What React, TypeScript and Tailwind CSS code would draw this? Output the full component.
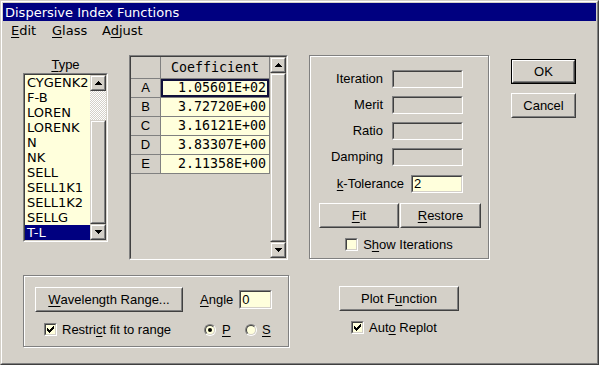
import React from "react";

const F = "font-['Liberation_Sans',Arial,sans-serif] text-[13px] text-black";
const V = "font-['DejaVu_Sans',Verdana,sans-serif] text-[13px]";
const M = "font-['DejaVu_Sans_Mono',monospace] text-[13.3px]";

function Sunken({ className = "", inner = "", children }: { className?: string; inner?: string; children?: React.ReactNode }) {
  return (
    <div className={`border border-t-[#808080] border-l-[#808080] border-r-white border-b-white ${className}`}>
      <div className={`w-full h-full border border-t-[#404040] border-l-[#404040] border-r-[#d4d0c8] border-b-[#d4d0c8] ${inner}`}>
        {children}
      </div>
    </div>
  );
}

function Btn({ className = "", children }: { className?: string; children?: React.ReactNode }) {
  return (
    <div className={`border border-t-white border-l-white border-r-[#404040] border-b-[#404040] bg-[#d4d0c8] ${className}`}>
      <div className={`w-full h-full border border-t-[#d4d0c8] border-l-[#d4d0c8] border-r-[#808080] border-b-[#808080] flex items-center justify-center ${F}`}>
        {children}
      </div>
    </div>
  );
}

function ScrollPart({ className = "", children }: { className?: string; children?: React.ReactNode }) {
  return (
    <div className={`border border-t-[#d4d0c8] border-l-[#d4d0c8] border-r-[#404040] border-b-[#404040] bg-[#d4d0c8] ${className}`}>
      <div className="w-full h-full border border-t-white border-l-white border-r-[#808080] border-b-[#808080] flex items-center justify-center">
        {children}
      </div>
    </div>
  );
}

function UpArrow() {
  return (
    <svg width="7" height="4" viewBox="0 0 7 4" shapeRendering="crispEdges">
      <path d="M3 0h1v1h1v1h1v1h1v1H0V3h1V2h1V1h1z" fill="#000" />
    </svg>
  );
}

function DownArrow() {
  return (
    <svg width="7" height="4" viewBox="0 0 7 4" shapeRendering="crispEdges">
      <path d="M0 0h7v1H6v1H5v1H4v1H3V3H2V2H1V1H0z" fill="#000" />
    </svg>
  );
}

function Check({ checked }: { checked?: boolean }) {
  return (
    <Sunken className="w-[13px] h-[13px] shrink-0" inner="bg-[#ffffdc] flex items-center justify-center">
      {checked && (
        <svg width="7" height="7" viewBox="0 0 7 7" shapeRendering="crispEdges">
          <path d="M6 0h1v3H6v1H5v1H4v1H3v1H2V6H1V5H0V2h1v1h1v1h1V3h1V2h1V1h1z" fill="#000" />
        </svg>
      )}
    </Sunken>
  );
}

function Radio({ on }: { on?: boolean }) {
  return (
    <div className="w-[12px] h-[12px] rounded-full border border-t-[#808080] border-l-[#808080] border-r-white border-b-white shrink-0">
      <div className="w-full h-full rounded-full border border-t-[#404040] border-l-[#404040] border-r-[#d4d0c8] border-b-[#d4d0c8] bg-[#ffffdc] flex items-center justify-center">
        {on && <div className="w-[4px] h-[4px] rounded-full bg-black" />}
      </div>
    </div>
  );
}

const U = ({ children }: { children: React.ReactNode }) => <span className="underline underline-offset-[2px]">{children}</span>;

const items = ["CYGENK2", "F-B", "LOREN", "LORENK", "N", "NK", "SELL", "SELL1K1", "SELL1K2", "SELLG", "T-L"];
const rows: [string, string][] = [
  ["A", "1.05601E+02"],
  ["B", "3.72720E+00"],
  ["C", "3.16121E+00"],
  ["D", "3.83307E+00"],
  ["E", "2.11358E+00"],
];

function FieldRow({ label, mt, yellow, value, fieldW = "w-[71px]", gap = "ml-[9px]" }: { label: React.ReactNode; mt: string; yellow?: boolean; value?: string; fieldW?: string; gap?: string }) {
  return (
    <div className={`flex justify-end items-center h-[18px] pr-[25px] ${mt}`}>
      <div className={`${F} leading-[18px] whitespace-nowrap`}>{label}</div>
      <Sunken className={`${fieldW} h-[18px] ${gap}`} inner={`${yellow ? "bg-[#ffffdc]" : "bg-[#d4d0c8]"} pl-[1px] ${F} leading-[14px]`}>
        {value}
      </Sunken>
    </div>
  );
}

export default function App() {
  return (
    <div className="w-[599px] h-[365px] bg-[#d4d0c8] border border-t-[#d4d0c8] border-l-[#d4d0c8] border-r-[#404040] border-b-[#404040] overflow-hidden">
      <div className="w-full h-full border border-t-white border-l-white border-r-[#808080] border-b-[#808080] p-px flex flex-col">
        {/* Title bar */}
        <div className={`h-[18px] shrink-0 bg-[#000080] text-white pl-[2px] pt-[2px] leading-[16px] ${V}`}>Dispersive Index Functions</div>
        {/* Menu */}
        <div className={`h-[19px] shrink-0 flex leading-[19px] pl-[8px] text-black ${V}`}>
          <div className="w-[41px]"><U>E</U>dit</div>
          <div className="w-[50px]"><U>G</U>lass</div>
          <div>A<U>d</U>just</div>
        </div>
        {/* Body */}
        <div className="flex flex-col">
          <div className="flex items-start pl-[20px]">
            {/* Type list */}
            <div className="mt-[17px] w-[85px] flex flex-col">
              <div className={`h-[15px] leading-[15px] text-center ${F}`}><U>T</U>ype</div>
              <Sunken className="mt-[1px] h-[169px] w-[85px]" inner="flex bg-[#ffffdc]">
                <div className="w-[65px] overflow-hidden flex flex-col">
                  {items.map((it, i) => (
                    <div
                      key={it}
                      className={`h-[15px] leading-[15px] pl-[2px] whitespace-nowrap ${V} ${i === items.length - 1 ? "bg-[#000080] text-white" : "text-black"}`}
                    >
                      {it}
                    </div>
                  ))}
                </div>
                <div className="w-[16px] flex flex-col">
                  <ScrollPart className="h-[16px]"><UpArrow /></ScrollPart>
                  <div className="h-[29px] bg-[repeating-conic-gradient(#ffffff_0%_25%,#d4d0c8_0%_50%)] bg-[length:2px_2px]" />
                  <ScrollPart className="h-[104px]" />
                  <ScrollPart className="h-[16px]"><DownArrow /></ScrollPart>
                </div>
              </Sunken>
            </div>

            {/* Grid */}
            <Sunken className="ml-[21px] mt-[15px] w-[159px] h-[205px]" inner="flex bg-[#d4d0c8]">
              <div className="w-[139px] flex flex-col">
                <div className="flex h-[22px]">
                  <div className="w-[30px] border-r border-b border-[#808080]" />
                  <div className={`w-[109px] border-r border-b border-[#808080] flex items-center justify-center ${M}`}>Coefficient</div>
                </div>
                {rows.map(([k, v], i) => (
                  <div key={k} className="flex h-[19px]">
                    <div className={`w-[30px] border-r border-b border-[#808080] flex items-center justify-center ${F}`}>{k}</div>
                    <div
                      className={`w-[109px] border-r border-b border-[#808080] bg-[#ffffdc] text-right pr-[3px] leading-[18px] ${M} ${i === 0 ? "shadow-[inset_0_0_0_2px_#10103a]" : ""}`}
                    >
                      {v}
                    </div>
                  </div>
                ))}
              </div>
              <div className="w-[16px] flex flex-col">
                <ScrollPart className="h-[16px]"><UpArrow /></ScrollPart>
                <ScrollPart className="h-[169px]" />
                <ScrollPart className="h-[16px]"><DownArrow /></ScrollPart>
              </div>
            </Sunken>

            {/* Fit group */}
            <div className="ml-[21px] mt-[15px] w-[180px] h-[204px] border border-[#808080] shadow-[inset_1px_1px_0_#ffffff,1px_1px_0_#ffffff] pt-[14px] flex flex-col">
              <FieldRow label="Iteration" mt="" />
              <FieldRow label="Merit" mt="mt-[8px]" />
              <FieldRow label="Ratio" mt="mt-[8px]" />
              <FieldRow label="Damping" mt="mt-[8px]" />
              <FieldRow label={<><U>k</U>-Tolerance</>} mt="mt-[9px]" yellow value="2" fieldW="w-[52px]" gap="ml-[7px]" />
              <div className="flex mt-[10px] pl-[9px]">
                <Btn className="w-[80px] h-[25px]"><U>F</U>it</Btn>
                <Btn className="w-[81px] h-[25px] ml-[1px]"><U>R</U>estore</Btn>
              </div>
              <div className="flex items-center justify-center mt-[10px] h-[13px]">
                <Check />
                <span className={`ml-[5px] ${F} leading-[13px]`}>S<U>h</U>ow Iterations</span>
              </div>
            </div>

            {/* OK / Cancel */}
            <div className="ml-[22px] mt-[19px] flex flex-col">
              <div className="border border-black w-[65px] h-[25px]">
                <Btn className="w-full h-full">OK</Btn>
              </div>
              <Btn className="w-[65px] h-[25px] mt-[9px]">Cancel</Btn>
            </div>
          </div>

          {/* Row 2 */}
          <div className="flex items-start pl-[20px] mt-[15px]">
            <div className="w-[266px] h-[72px] border border-[#808080] shadow-[inset_1px_1px_0_#ffffff,1px_1px_0_#ffffff] pt-[11px] pl-[11px] flex flex-col">
              <div className="flex items-center">
                <Btn className="w-[148px] h-[25px]"><U>W</U>avelength Range...</Btn>
                <span className={`ml-[17px] ${F}`}><U>A</U>ngle</span>
                <Sunken className="ml-[6px] w-[33px] h-[19px]" inner={`bg-[#ffffdc] pl-[1px] ${F} leading-[15px]`}>0</Sunken>
              </div>
              <div className="flex items-center mt-[11px] h-[13px]">
                <div className="w-[160px] ml-[9px] flex items-center">
                  <Check checked />
                  <span className={`ml-[5px] ${F} leading-[13px] whitespace-nowrap`}>Restri<U>c</U>t fit to range</span>
                </div>
                <div className="w-[41px] flex items-center">
                  <Radio on />
                  <span className={`ml-[6px] ${F} leading-[13px]`}><U>P</U></span>
                </div>
                <div className="flex items-center">
                  <Radio />
                  <span className={`ml-[5px] ${F} leading-[13px]`}><U>S</U></span>
                </div>
              </div>
            </div>

            <div className="ml-[50px] mt-[11px] flex flex-col">
              <Btn className="w-[120px] h-[25px]">Plot F<U>u</U>nction</Btn>
              <div className="flex items-center mt-[10px] pl-[12px] h-[13px]">
                <Check checked />
                <span className={`ml-[5px] ${F} leading-[13px]`}>Aut<U>o</U> Replot</span>
              </div>
            </div>
          </div>
        </div>
      </div>
    </div>
  );
}
